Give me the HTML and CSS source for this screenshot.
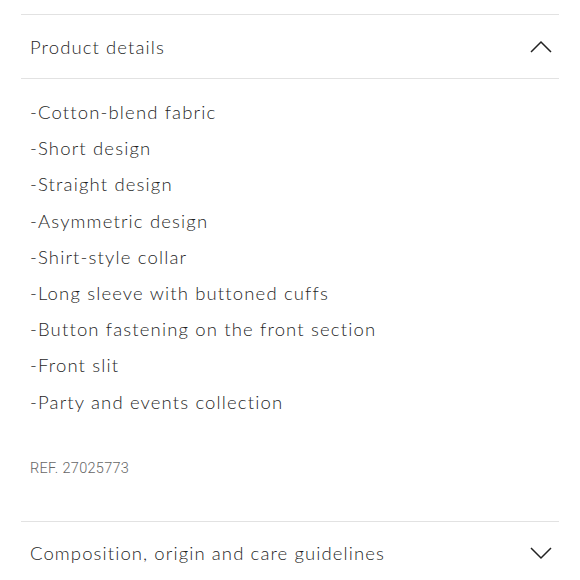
FILE: index.html
```html
<!DOCTYPE html>
<html lang="en">
<head>
<meta charset="utf-8">
<link rel="stylesheet" href="styles.css">
</head>
<body>
<div class="accordion">
  <section class="panel open">
    <div class="panel-head">
      <span class="title">Product details</span>
      <svg class="chev" width="22" height="13" viewBox="0 0 22 13"><path d="M1 12 L11 2 L21 12" fill="none" stroke="#222" stroke-width="1.5"/></svg>
    </div>
    <div class="panel-body">
      <ul class="features">
        <li>-Cotton-blend fabric</li>
        <li>-Short design</li>
        <li>-Straight design</li>
        <li>-Asymmetric design</li>
        <li>-Shirt-style collar</li>
        <li>-Long sleeve with buttoned cuffs</li>
        <li>-Button fastening on the front section</li>
        <li>-Front slit</li>
        <li>-Party and events collection</li>
      </ul>
      <p class="ref">REF. 27025773</p>
    </div>
  </section>
  <section class="panel">
    <div class="panel-head">
      <span class="title">Composition, origin and care guidelines</span>
      <svg class="chev" width="22" height="13" viewBox="0 0 22 13"><path d="M1 1 L11 11 L21 1" fill="none" stroke="#222" stroke-width="1.5"/></svg>
    </div>
  </section>
</div>
</body>
</html>
```
FILE: styles.css
```css
html, body {
  margin: 0;
  padding: 0;
  background: #fff;
}
body {
  font-family: "Lato", "Open Sans", sans-serif;
  color: #1f1f1f;
  overflow: hidden;
  height: 580px;
}
.accordion {
  padding: 14px 21px 0 21px;
}
.panel {
  border-top: 1.5px solid #e2e2e2;
}
.panel-head {
  height: 63px;
  display: flex;
  align-items: center;
  justify-content: space-between;
  padding: 0 9px 0 9px;
  border-bottom: 1.5px solid #e2e2e2;
}
.panel:last-child .panel-head { border-bottom: none; }
.title {
  font-size: 18.5px;
  font-weight: 300;
  letter-spacing: 1.1px;
  color: #1f1f1f;
}
.chev { display: block; margin-right: -2px; }
.panel-body {
  padding: 15px 9px 0;
}
.features {
  list-style: none;
  margin: 0;
  padding: 0;
}
.features li {
  font-size: 18.5px;
  font-weight: 300;
  line-height: 36.2px;
  letter-spacing: 1.15px;
}
.ref {
  margin: 39px 0 0;
  font-family: "Roboto", "Liberation Sans", sans-serif;
  font-size: 14.5px;
  font-weight: 300;
  line-height: 20px;
  color: #666;
  letter-spacing: 0.3px;
  padding-bottom: 42px;
}
```
